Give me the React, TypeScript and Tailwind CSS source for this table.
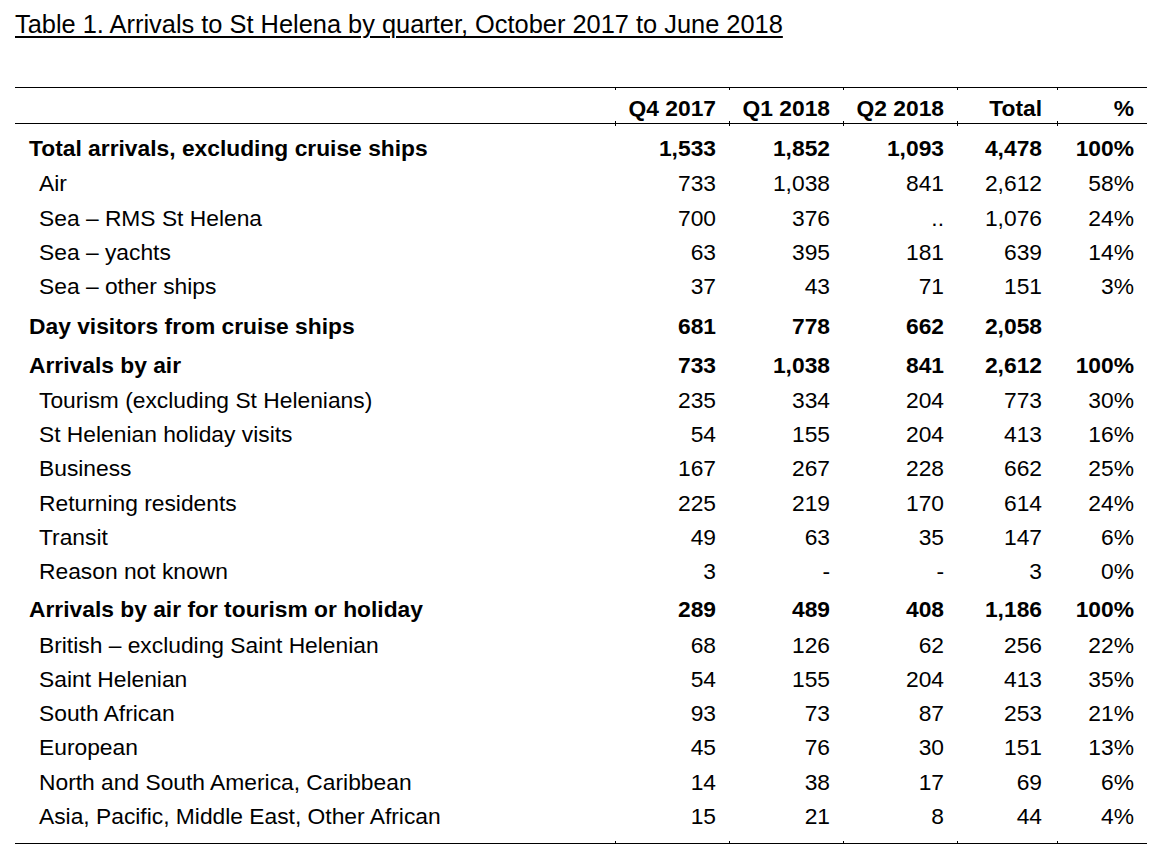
import React from "react";

type Row = { label: string; vals: string[]; bold?: boolean; pt?: string };

const rows: Row[] = [
  { label: "Total arrivals, excluding cruise ships", vals: ["1,533", "1,852", "1,093", "4,478", "100%"], bold: true, pt: "pt-[5px]" },
  { label: "Air", vals: ["733", "1,038", "841", "2,612", "58%"] },
  { label: "Sea \u2013 RMS St Helena", vals: ["700", "376", "..", "1,076", "24%"] },
  { label: "Sea \u2013 yachts", vals: ["63", "395", "181", "639", "14%"] },
  { label: "Sea \u2013 other ships", vals: ["37", "43", "71", "151", "3%"] },
  { label: "Day visitors from cruise ships", vals: ["681", "778", "662", "2,058", ""], bold: true, pt: "pt-[6px]" },
  { label: "Arrivals by air", vals: ["733", "1,038", "841", "2,612", "100%"], bold: true, pt: "pt-[3px]" },
  { label: "Tourism (excluding St Helenians)", vals: ["235", "334", "204", "773", "30%"] },
  { label: "St Helenian holiday visits", vals: ["54", "155", "204", "413", "16%"] },
  { label: "Business", vals: ["167", "267", "228", "662", "25%"] },
  { label: "Returning residents", vals: ["225", "219", "170", "614", "24%"] },
  { label: "Transit", vals: ["49", "63", "35", "147", "6%"] },
  { label: "Reason not known", vals: ["3", "-", "-", "3", "0%"] },
  { label: "Arrivals by air for tourism or holiday", vals: ["289", "489", "408", "1,186", "100%"], bold: true, pt: "pt-[4px]" },
  { label: "British \u2013 excluding Saint Helenian", vals: ["68", "126", "62", "256", "22%"] },
  { label: "Saint Helenian", vals: ["54", "155", "204", "413", "35%"] },
  { label: "South African", vals: ["93", "73", "87", "253", "21%"] },
  { label: "European", vals: ["45", "76", "30", "151", "13%"] },
  { label: "North and South America, Caribbean", vals: ["14", "38", "17", "69", "6%"] },
  { label: "Asia, Pacific, Middle East, Other African", vals: ["15", "21", "8", "44", "4%"] },
];

const cols = "grid grid-cols-[600px_114px_114px_114px_100px_90px]";
const valPad = ["pr-[13px]", "pr-[13px]", "pr-[13px]", "pr-[15px]", "pr-[13px]"];

function Ticks() {
  return (
    <div className={`${cols} h-[2px]`}>
      <div />
      <div className="border-l border-black" />
      <div className="border-l border-black" />
      <div className="border-l border-black" />
      <div className="border-l border-black" />
      <div className="border-l border-black" />
    </div>
  );
}

function Line() {
  return <div className="h-[1px] bg-black" />;
}

export default function App() {
  return (
    <div
      className="w-[1169px] h-[853px] bg-white text-black overflow-hidden"
      style={{ fontFamily: '"Liberation Sans", Arial, sans-serif' }}
    >
      <div className="pl-[15px] pt-[10px] text-[25.4px] leading-[29px]">
        <span className="underline decoration-2 underline-offset-[3px]">
          Table 1. Arrivals to St Helena by quarter, October 2017 to June 2018
        </span>
      </div>

      <div className="ml-[15px] mt-[48px] w-[1132px] text-[22.8px]">
        <Line />
        <Ticks />
        <div className={`${cols} h-[31px] pt-[5px] leading-[26px] font-bold`}>
          <div />
          {["Q4 2017", "Q1 2018", "Q2 2018", "Total", "%"].map((h, i) => (
            <div key={h} className={`text-right ${valPad[i]}`}>
              {h}
            </div>
          ))}
        </div>
        <Ticks />
        <Line />
        <Ticks />
        <div className="pb-[8px]">
          {rows.map((r, idx) => (
            <div key={idx} className={`${cols} ${r.bold ? `font-bold ${r.pt}` : ""}`}>
              <div
                className={`${r.bold ? "pl-[14px] leading-[35.25px]" : "pl-[24px] leading-[34.25px]"} whitespace-nowrap`}
              >
                {r.label}
              </div>
              {r.vals.map((v, i) => (
                <div
                  key={i}
                  className={`text-right ${valPad[i]} ${r.bold ? "leading-[35.25px]" : "leading-[34.25px]"}`}
                >
                  {v}
                </div>
              ))}
            </div>
          ))}
        </div>
        <Ticks />
        <Line />
      </div>
    </div>
  );
}
